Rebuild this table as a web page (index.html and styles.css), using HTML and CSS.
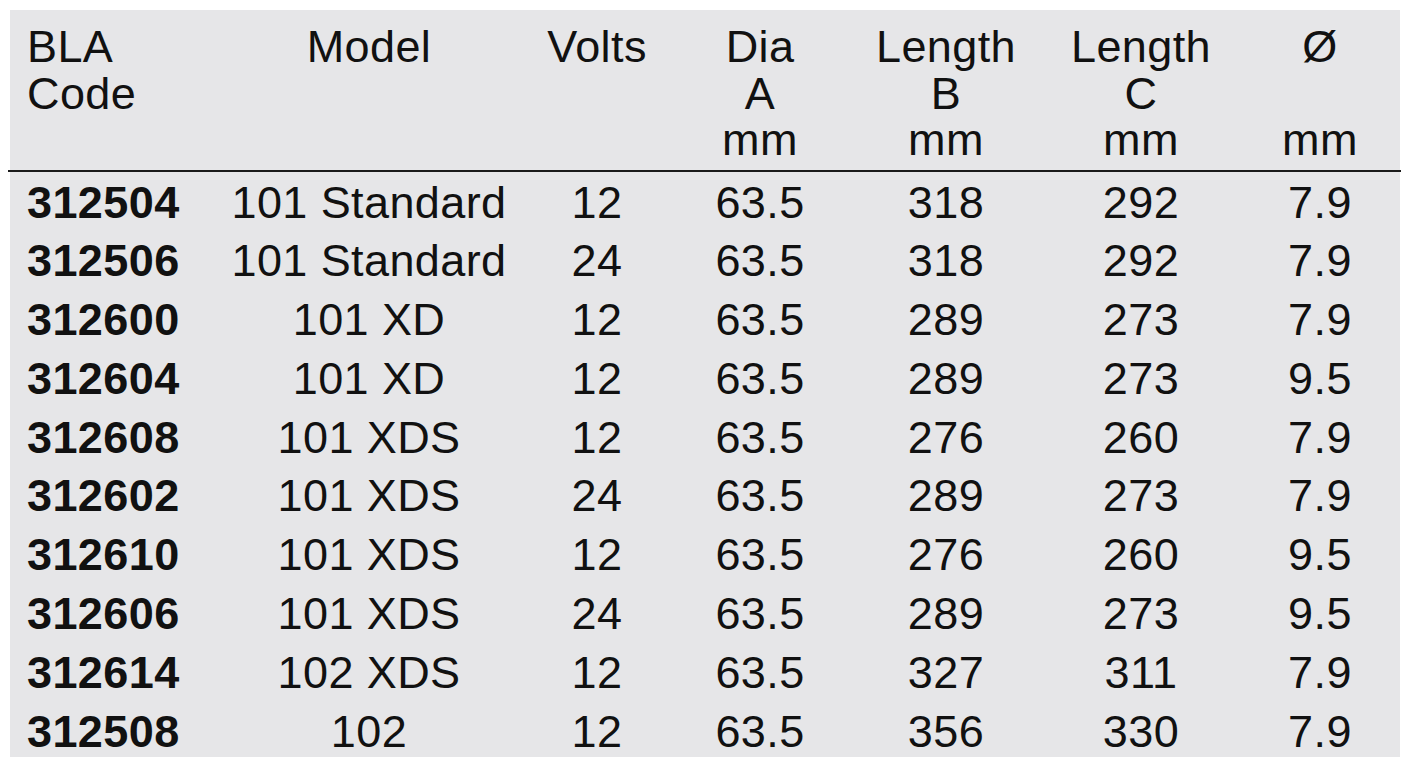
FILE: index.html
```html
<!DOCTYPE html>
<html lang="en">
<head>
<meta charset="utf-8">
<title>BLA Code table</title>
<link rel="stylesheet" href="styles.css">
</head>
<body>
<div class="sheet">
  <div class="grid head">
    <div class="cell left">BLA<br>Code</div>
    <div class="cell">Model</div>
    <div class="cell">Volts</div>
    <div class="cell">Dia<br>A<br>mm</div>
    <div class="cell">Length<br>B<br>mm</div>
    <div class="cell">Length<br>C<br>mm</div>
    <div class="cell">Ø<br>&nbsp;<br>mm</div>
  </div>
  <div class="rule"></div>
  <div class="body">
    <div class="grid row"><div class="cell left code">312504</div><div class="cell">101 Standard</div><div class="cell">12</div><div class="cell">63.5</div><div class="cell">318</div><div class="cell">292</div><div class="cell">7.9</div></div>
    <div class="grid row"><div class="cell left code">312506</div><div class="cell">101 Standard</div><div class="cell">24</div><div class="cell">63.5</div><div class="cell">318</div><div class="cell">292</div><div class="cell">7.9</div></div>
    <div class="grid row"><div class="cell left code">312600</div><div class="cell">101 XD</div><div class="cell">12</div><div class="cell">63.5</div><div class="cell">289</div><div class="cell">273</div><div class="cell">7.9</div></div>
    <div class="grid row"><div class="cell left code">312604</div><div class="cell">101 XD</div><div class="cell">12</div><div class="cell">63.5</div><div class="cell">289</div><div class="cell">273</div><div class="cell">9.5</div></div>
    <div class="grid row"><div class="cell left code">312608</div><div class="cell">101 XDS</div><div class="cell">12</div><div class="cell">63.5</div><div class="cell">276</div><div class="cell">260</div><div class="cell">7.9</div></div>
    <div class="grid row"><div class="cell left code">312602</div><div class="cell">101 XDS</div><div class="cell">24</div><div class="cell">63.5</div><div class="cell">289</div><div class="cell">273</div><div class="cell">7.9</div></div>
    <div class="grid row"><div class="cell left code">312610</div><div class="cell">101 XDS</div><div class="cell">12</div><div class="cell">63.5</div><div class="cell">276</div><div class="cell">260</div><div class="cell">9.5</div></div>
    <div class="grid row"><div class="cell left code">312606</div><div class="cell">101 XDS</div><div class="cell">24</div><div class="cell">63.5</div><div class="cell">289</div><div class="cell">273</div><div class="cell">9.5</div></div>
    <div class="grid row"><div class="cell left code">312614</div><div class="cell">102 XDS</div><div class="cell">12</div><div class="cell">63.5</div><div class="cell">327</div><div class="cell">311</div><div class="cell">7.9</div></div>
    <div class="grid row"><div class="cell left code">312508</div><div class="cell">102</div><div class="cell">12</div><div class="cell">63.5</div><div class="cell">356</div><div class="cell">330</div><div class="cell">7.9</div></div>
  </div>
</div>
</body>
</html>
```
FILE: styles.css
```css
html, body {
  margin: 0;
  padding: 0;
  background: #ffffff;
}

body {
  font-family: "Liberation Sans", Arial, Helvetica, sans-serif;
  color: #111111;
}

.sheet {
  box-sizing: border-box;
  margin: 10px;
  width: 1390px;
  height: 747px;
  padding-top: 14px;
  background: #e6e6e8;
}

.grid {
  display: grid;
  grid-template-columns: 193px 298px 158px 168px 204px 186px 172px;
  padding-left: 17px;
  font-size: 45px;
  letter-spacing: 0.4px;
}

.cell {
  text-align: center;
  white-space: nowrap;
}

.cell.left {
  text-align: left;
}

.head {
  line-height: 46.5px;
}

.rule {
  height: 2px;
  margin: 6.5px -1px 0 -2px;
  background: #1a1a1a;
}

.body {
  padding-top: 1.5px;
}

.row {
  line-height: 58.8px;
}

.code {
  font-weight: bold;
}
```
